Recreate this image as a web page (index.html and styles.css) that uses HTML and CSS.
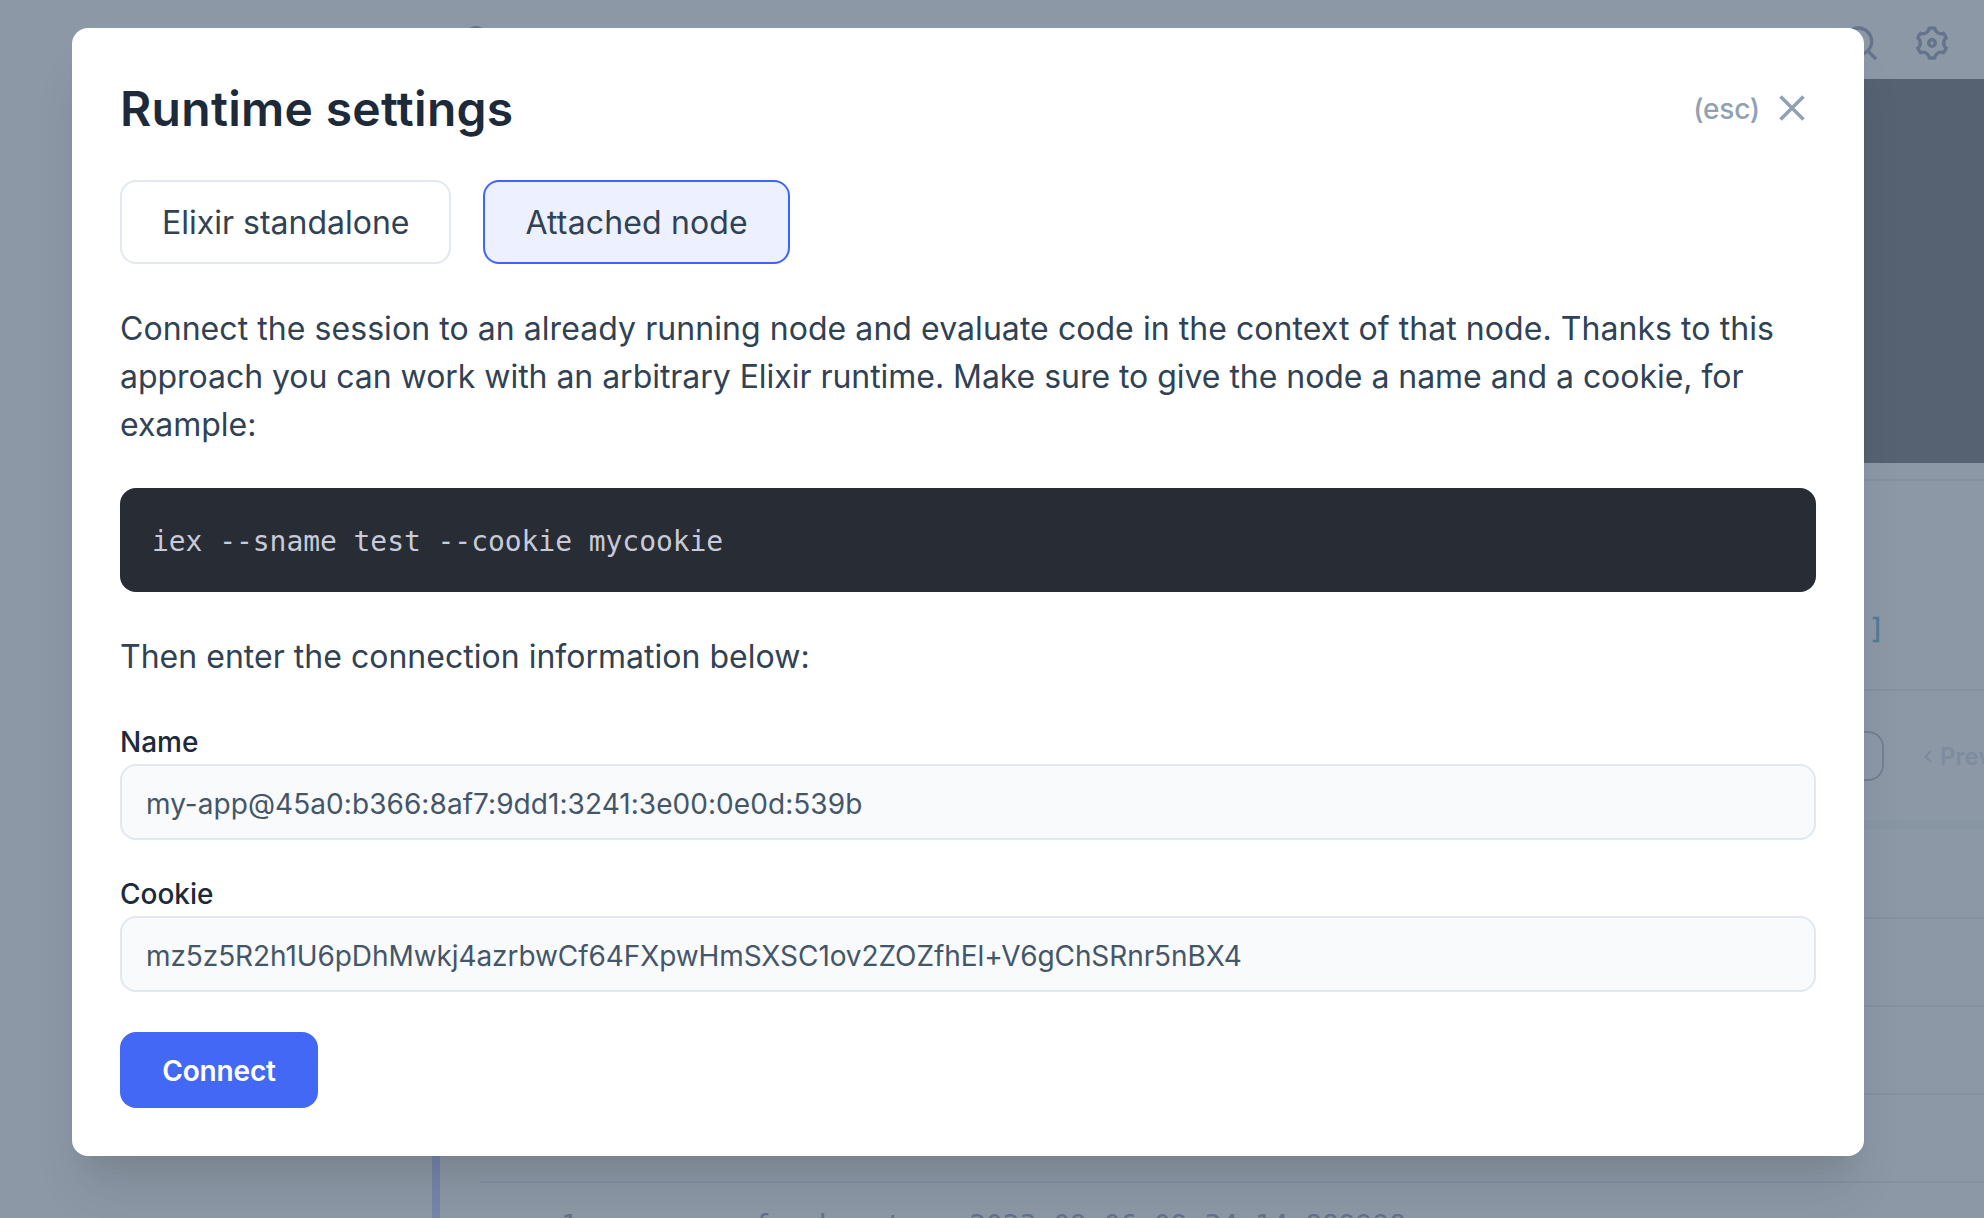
FILE: index.html
```html
<!DOCTYPE html>
<html lang="en">
<head>
<meta charset="utf-8">
<title>Runtime settings</title>
<link rel="stylesheet" href="styles.css">
</head>
<body>
<div class="page">
  <header class="topbar">
    <span class="brand-dot"></span>
    <div class="topbar-actions">
      <svg viewBox="0 0 24 24" fill="currentColor"><path d="M18.031 16.617l4.283 4.282-1.415 1.415-4.282-4.283A8.960 8.960 0 0 1 11 20c-4.968 0-9-4.032-9-9s4.032-9 9-9 9 4.032 9 9a8.960 8.960 0 0 1-1.969 5.617zm-2.006-.742A6.977 6.977 0 0 0 18 11c0-3.868-3.133-7-7-7-3.868 0-7 3.132-7 7 0 3.867 3.132 7 7 7a6.977 6.977 0 0 0 4.875-1.975l.15-.15z"/></svg>
      <svg viewBox="0 0 24 24" fill="currentColor"><path d="M3.340 17a10.018 10.018 0 0 1-.978-2.326 3 3 0 0 0 .002-5.347A9.990 9.990 0 0 1 4.865 4.990a3 3 0 0 0 4.631-2.674 9.990 9.990 0 0 1 5.007.002 3 3 0 0 0 4.632 2.672c.579.59 1.093 1.261 1.525 2.010.433.749.757 1.526.978 2.326a3 3 0 0 0-.002 5.347 9.990 9.990 0 0 1-2.501 4.337 3 3 0 0 0-4.631 2.674 9.990 9.990 0 0 1-5.007-.002 3 3 0 0 0-4.632-2.672A10.018 10.018 0 0 1 3.340 17zm5.660.196a4.993 4.993 0 0 1 2.250 2.770c.499.047 1 .048 1.499.001A4.993 4.993 0 0 1 15 17.197a4.993 4.993 0 0 1 3.525-.565c.29-.408.54-.843.748-1.298A4.993 4.993 0 0 1 18 12c0-1.260.47-2.437 1.273-3.334a8.126 8.126 0 0 0-.75-1.298A4.993 4.993 0 0 1 15 6.804a4.993 4.993 0 0 1-2.250-2.770c-.499-.047-1-.048-1.499-.001A4.993 4.993 0 0 1 9 6.803a4.993 4.993 0 0 1-3.525.565 7.990 7.990 0 0 0-.748 1.298A4.993 4.993 0 0 1 6 12c0 1.260-.47 2.437-1.273 3.334a8.126 8.126 0 0 0 .75 1.298A4.993 4.993 0 0 1 9 17.196zM12 15a3 3 0 1 1 0-6 3 3 0 0 1 0 6zm0-2a1 1 0 1 0 0-2 1 1 0 0 0 0 2z"/></svg>
    </div>
  </header>
  <div class="editor"></div>
  <section class="output"><span class="bracket">]</span></section>
  <section class="pager"><span class="select"></span><span class="chevron"></span><span class="prev">Prev</span></section>
  <section class="rows">
    <div class="row row-first"></div><div class="row"></div><div class="row"></div><div class="row"></div>
    <div class="row-text"><span class="row-id">1</span><span class="row-name">f</span><span class="row-d">d</span><span class="row-t">t</span><span class="row-date">2023-09-06 09:34:14.889998</span></div>
  </section>
  <span class="cell-bar"></span>
</div>
<main class="modal">
  <header class="modal-head">
    <h1>Runtime settings</h1>
    <button class="close"><span>(esc)</span><svg viewBox="0 0 26 26" fill="none" stroke="currentColor" stroke-width="3.6"><path d="M1.500 1.500l23 23M24.500 1.500l-23 23"/></svg></button>
  </header>
  <nav class="tabs">
    <button class="tab">Elixir standalone</button>
    <button class="tab active">Attached node</button>
  </nav>
  <p>Connect the session to an already running node and evaluate code in the context of that node. Thanks to this approach you can work with an arbitrary Elixir runtime. Make sure to give the node a name and a cookie, for example:</p>
  <pre><code>iex --sname test --cookie mycookie</code></pre>
  <p class="hint">Then enter the connection information below:</p>
  <form>
    <label>Name<input class="name" type="text" value="my-app@45a0:b366:8af7:9dd1:3241:3e00:0e0d:539b"></label>
    <label>Cookie<input class="cookie" type="text" value="mz5z5R2h1U6pDhMwkj4azrbwCf64FXpwHmSXSC1ov2ZOZfhEl+V6gChSRnr5nBX4"></label>
    <button class="connect" type="button">Connect</button>
  </form>
</main>
</body>
</html>
```

FILE: styles.css
```css
* { box-sizing: border-box; }
body {
  margin: 0;
  width: 1984px;
  height: 1218px;
  overflow: hidden;
  position: relative;
  background: #8c98a6;
  font-family: Inter, "Liberation Sans", sans-serif;
}
button { font: inherit; }

/* dimmed page behind the dialog */
.page { height: 1218px; overflow: hidden; position: relative; color: #64748b; }
.topbar { height: 79px; display: flex; justify-content: space-between; padding: 23px 32px 0 464px; }
.brand-dot { width: 24px; height: 24px; margin-top: 3px; border-radius: 50%; background: #65758a; }
.topbar-actions { display: flex; gap: 32px; color: #64748a; }
.topbar-actions svg { width: 40px; height: 40px; }
.editor { height: 384px; margin-left: 480px; background: #566271; }
.output { margin: 16px 0 0 480px; height: 210px; border-top: 2px solid #8391a0; padding: 128px 99px 0 0; text-align: right; }
.bracket { font: 28px/42px "DejaVu Sans Mono", monospace; color: #557a99; -webkit-text-stroke: .4px #557a99; }
.pager { margin-left: 480px; height: 140px; border-top: 2px solid #8391a0; border-bottom: 9px solid #8895a3; padding-top: 40px; display: flex; justify-content: flex-end; white-space: nowrap; }
.select { width: 120px; height: 50px; border: 2px solid #718096; border-radius: 16px; }
.chevron { width: 9px; height: 9px; margin: 21px 0 0 42px; border: solid #7b899c; border-width: 0 0 2.500px 2.500px; transform: rotate(45deg); }
.prev { width: 44px; margin-left: 5px; overflow: hidden; font-size: 24px; font-weight: 600; line-height: 52px; color: #7e8c9f; }
.rows { margin-left: 480px; }
.row { height: 88px; border-bottom: 2px solid #8391a0; }
.row-first { height: 90px; }
.row-text { display: flex; padding: 22px 0 0 81px; font: 28px/42px "DejaVu Sans Mono", monospace; letter-spacing: -.06px; color: #62728a; }
.row-name { margin-left: 176px; }
.row-d { margin-left: 39px; }
.row-t { margin-left: 59px; }
.row-date { margin-left: 67px; }
.cell-bar { position: absolute; left: 432px; top: 0; width: 8px; height: 1218px; background: linear-gradient(transparent 1100px, #7785aa 1100px); }

/* dialog */
.modal {
  position: absolute;
  left: 72px;
  top: 28px;
  width: 1792px;
  height: 1128px;
  padding: 48px;
  border-radius: 16px;
  background: #fff;
  box-shadow: 0 40px 50px -10px rgba(0, 0, 0, .1), 0 20px 20px -10px rgba(0, 0, 0, .04);
  color: #304254;
  font-size: 32px;
  line-height: 48px;
}
.modal-head { display: flex; justify-content: space-between; height: 64px; margin-bottom: 40px; }
h1 { margin: 0; padding-top: 1px; font-size: 48px; font-weight: 600; line-height: 64px; letter-spacing: .3px; color: #1c2a3a; }
.close { display: flex; align-items: center; gap: 19px; padding: 0 11px 0 0; border: 0; background: none; color: #91a1b4; font-size: 28px; font-weight: 500; }
.close span { padding-top: 2px; letter-spacing: -.2px; }
.close svg { width: 26px; height: 26px; }
.tabs { display: flex; gap: 32px; margin-bottom: 40px; }
.tab { height: 84px; padding: 2px 40px 0; border: 2px solid #e1e8f0; border-radius: 16px; background: #fff; color: #304254; }
.tab.active { border-color: #3e64ff; background: #ecf0ff; letter-spacing: .14px; }
p { margin: 0 0 39px; padding-top: 1px; letter-spacing: -.04px; }
p::first-line { letter-spacing: .06px; }
.hint::first-line { letter-spacing: .02px; }
pre { margin: 0 0 40px; height: 104px; padding: 31px 32px; border-radius: 16px; background: #282c34; color: #c8cad8; line-height: 42px; }
code { font: 28px/42px "DejaVu Sans Mono", monospace; letter-spacing: -.06px; }
form { display: flex; flex-direction: column; align-items: flex-start; }
label { display: block; width: 100%; margin-bottom: 32px; color: #1c2a3a; font-size: 28px; font-weight: 500; line-height: 44px; }
input { display: block; width: 100%; height: 76px; padding: 3px 24px 0; border: 2px solid #e1e8f0; border-radius: 16px; background: #f8fafc; color: #445668; font: 400 28px Inter, sans-serif; }
.name { letter-spacing: .06px; }
.cookie { letter-spacing: -.08px; }
.connect { width: 198px; height: 76px; margin-top: 8px; padding: 2px 0 0; border: 0; border-radius: 16px; background: #4468f6; color: #fff; font-size: 28px; font-weight: 600; letter-spacing: -.15px; }
```
